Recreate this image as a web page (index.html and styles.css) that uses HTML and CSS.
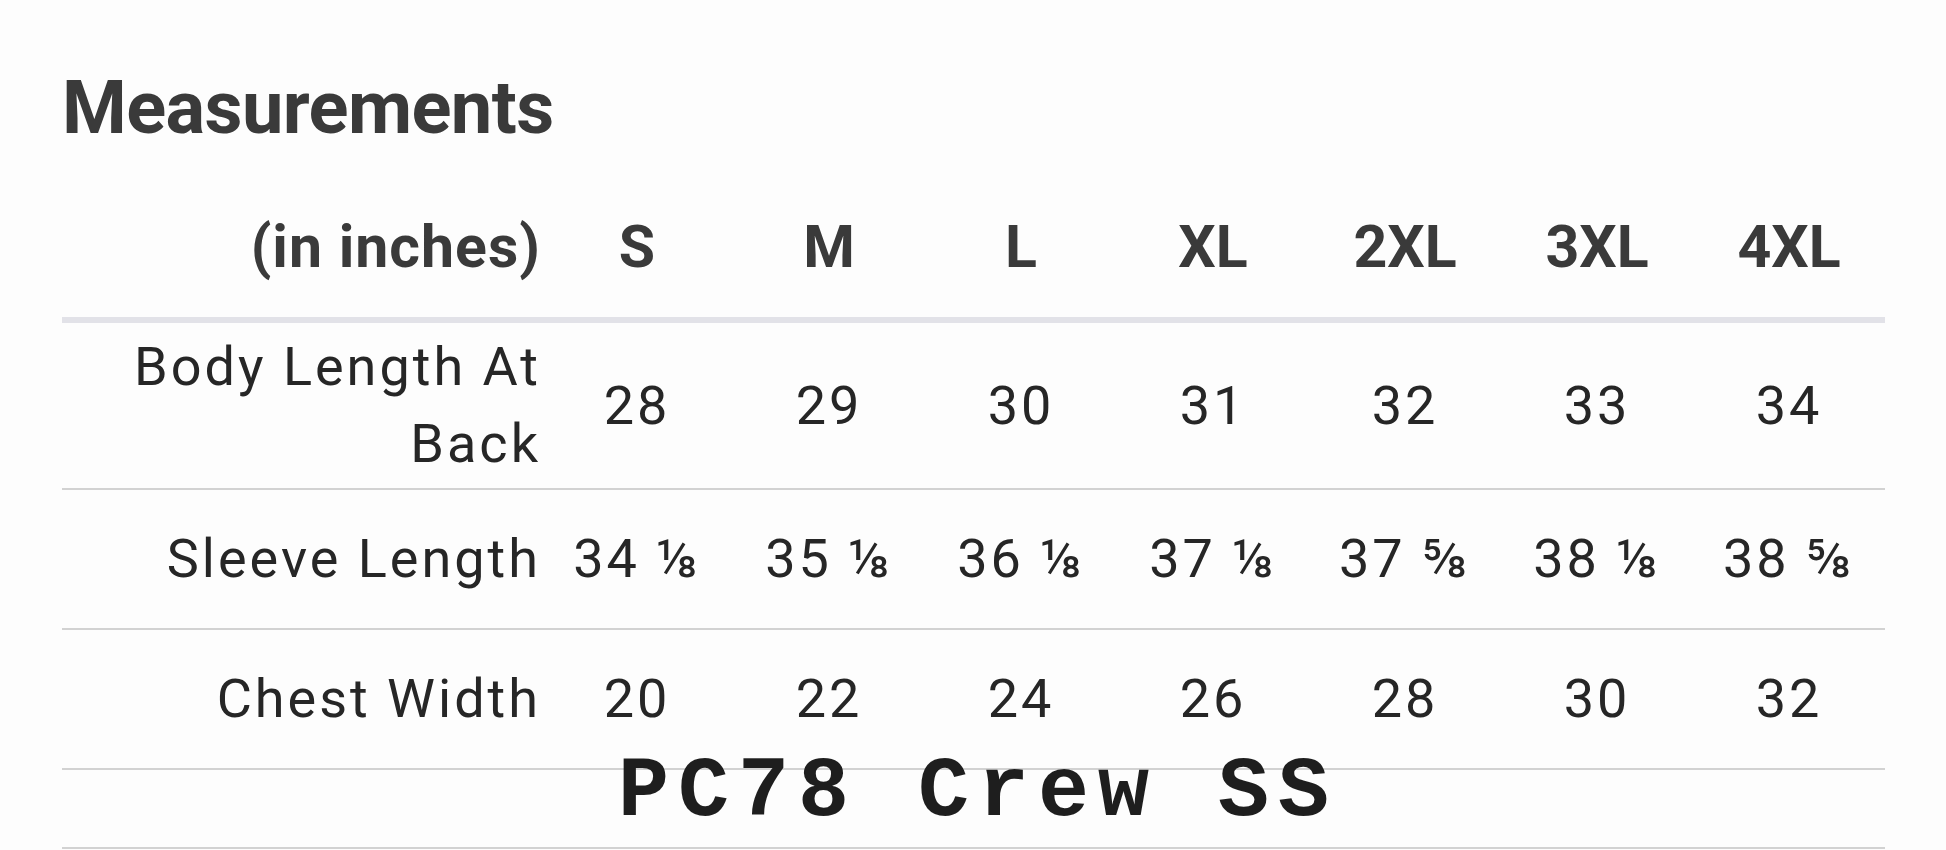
FILE: index.html
```html
<!DOCTYPE html>
<html>
<head>
<meta charset="utf-8">
<link rel="stylesheet" href="styles.css">
</head>
<body>
<div class="page">
  <h1 class="title">Measurements</h1>
  <div class="table-wrap">
    <table class="sizes">
      <thead>
        <tr>
          <th class="label">(in inches)</th>
          <th>S</th><th>M</th><th>L</th><th>XL</th><th>2XL</th><th>3XL</th><th>4XL</th>
        </tr>
      </thead>
      <tbody>
        <tr class="row-double">
          <td class="label">Body Length At<br>Back</td>
          <td>28</td><td>29</td><td>30</td><td>31</td><td>32</td><td>33</td><td>34</td>
        </tr>
        <tr class="row-single">
          <td class="label">Sleeve Length</td>
          <td>34 ⅛</td><td>35 ⅛</td><td>36 ⅛</td><td>37 ⅛</td><td>37 ⅝</td><td>38 ⅛</td><td>38 ⅝</td>
        </tr>
        <tr class="row-single">
          <td class="label">Chest Width</td>
          <td>20</td><td>22</td><td>24</td><td>26</td><td>28</td><td>30</td><td>32</td>
        </tr>
        <tr class="row-empty">
          <td class="label"></td>
          <td></td><td></td><td></td><td></td><td></td><td></td><td></td>
        </tr>
      </tbody>
    </table>
    <div class="stamp">PC78 Crew SS</div>
  </div>
</div>
</body>
</html>
```
FILE: styles.css
```css
html, body {
  margin: 0;
  padding: 0;
  background: #fdfdfd;
}
body {
  width: 1946px;
  height: 850px;
  overflow: hidden;
  font-family: Roboto, "Liberation Sans", sans-serif;
}
.page {
  padding-left: 62px;
}
.title {
  margin: 71px 0 0 0;
  font-size: 74px;
  line-height: 74px;
  font-weight: 700;
  color: #3a3a3a;
  letter-spacing: -0.6px;
}
.table-wrap {
  position: relative;
  width: 1822px;
  margin-top: 31px;
}
.sizes {
  width: 1822px;
  border-collapse: collapse;
  table-layout: fixed;
}
.sizes th,
.sizes td {
  padding: 0;
  text-align: center;
  width: 192px;
}
.sizes th.label,
.sizes td.label {
  width: 479px;
  text-align: right;
  padding-right: 0;
}
.sizes th {
  font-size: 59px;
  line-height: 59px;
  font-weight: 700;
  color: #3a3a3a;
  letter-spacing: 0;
  padding-top: 41px;
  padding-bottom: 41px;
  border-bottom: 6px solid #e2e2e8;
}
.sizes th.label {
  letter-spacing: 1px;
}
.sizes td {
  font-size: 54px;
  line-height: 77px;
  font-weight: 400;
  color: #262626;
  letter-spacing: 3px;
  vertical-align: middle;
  border-bottom: 2px solid #d2d2d2;
}
.row-double td {
  padding-top: 5px;
  padding-bottom: 6px;
}
.row-single td {
  padding-top: 30px;
  padding-bottom: 31px;
}
.row-empty td {
  height: 77px;
}
.stamp {
  position: absolute;
  left: 556px;
  top: 574px;
  font-family: "Courier New", "Liberation Mono", monospace;
  font-weight: 700;
  font-size: 85px;
  line-height: 85px;
  letter-spacing: 9px;
  color: #1e1e1e;
  white-space: nowrap;
}
```
